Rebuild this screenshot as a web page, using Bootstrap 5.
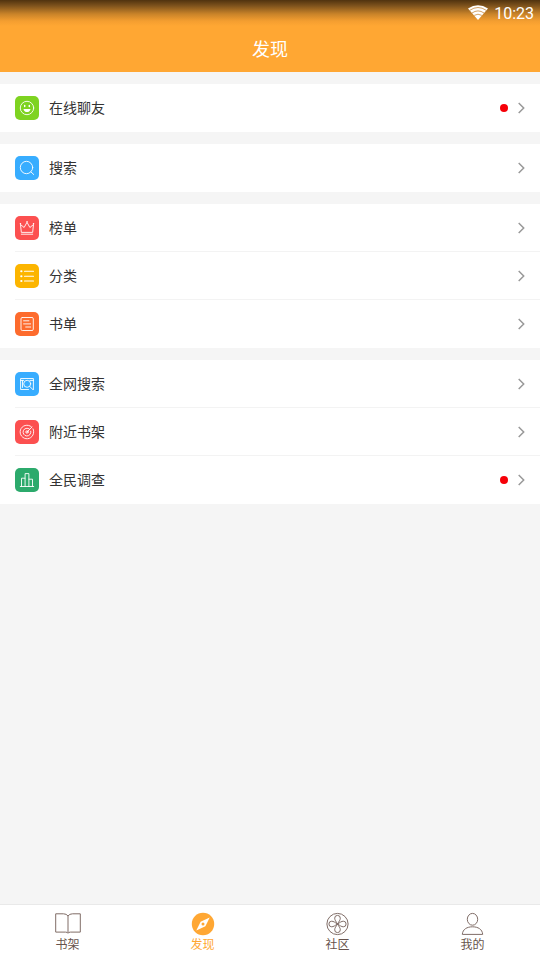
<!DOCTYPE html>
<html lang="zh-CN">
<head>
<meta charset="utf-8">
<meta name="viewport" content="width=device-width, initial-scale=1">
<title>发现</title>
<link href="https://cdn.jsdelivr.net/npm/bootstrap@5.3.0/dist/css/bootstrap.min.css" rel="stylesheet">
<style>
body{font-family:Roboto,"Noto Sans CJK SC",sans-serif;background:#f5f5f5;color:#333}
.app-head{height:72px;color:#fff;background:linear-gradient(#50330f 0,#80541d 6px,#c98329 14px,#f49e30 21px,#ffa733 26px)}
.status{height:25px;font-size:16px;line-height:25px;padding-right:6px;gap:6px}
.status span{padding-top:1px}
.title{height:47px;font-size:18px;line-height:49px}
.groups{gap:12px;padding-top:12px}
.group-item{height:48px;padding:0 15px 0 0;margin-left:15px;font-size:14px;border:0;color:#333;background:#fff}
.group-item span{padding-top:1px}
.group-item + .group-item{box-shadow:0 -1px 0 #f3f3f3}
.tile{width:24px;height:24px;border-radius:5px;margin-right:10px;fill:none;stroke:#fff;stroke-width:.9;stroke-linecap:round;stroke-linejoin:round}
.green{background:#7ed321}.blue{background:#38adff}.red{background:#fc5050}.yellow{background:#fcb500}.orange{background:#fd6b2d}.teal{background:#2caa6c}
.dot{width:8px;height:8px;background:#f60008;margin-right:10px}
.chev{fill:none;stroke:#999;stroke-width:1.5}
.tabs{height:56px;background:#fff;border-top:1px solid #e9e9e9}
.tab-link{color:#67534c;font-size:12px;line-height:16px;padding-top:6px}
.tab-link span{padding-top:1px}
.tab-link svg{fill:none;stroke:#806d67;stroke-width:1}
.tab-link.current{color:#ffa733}
</style>
<script src="https://cdn.jsdelivr.net/npm/bootstrap@5.3.0/dist/js/bootstrap.bundle.min.js"></script>
</head>
<body class="vh-100 d-flex flex-column overflow-hidden">
<header class="app-head flex-shrink-0">
<div class="status d-flex justify-content-end align-items-center">
<svg width="20" height="15" viewBox="0 0 20 15"><path fill="#fff" d="M0 3.5Q10-3 20 3.5L10 15Z"/><path d="M1.8 5.3Q10-.3 18.2 5.3M4 8Q10 3.8 16 8M6.2 10.4Q10 8 13.8 10.4" fill="none" stroke="#c98a3e" stroke-width=".8"/></svg>
<span>10:23</span>
</div>
<div class="title text-center">发现</div>
</header>
<main class="groups flex-grow-1 d-flex flex-column">
<section class="bg-white">
<a class="group-item d-flex align-items-center text-decoration-none" href="#"><svg class="tile green" viewBox="0 0 24 24"><circle cx="12" cy="12" r="6.7"/><path d="M8.5 13h7c-.2 4.1-6.8 4.1-7 0Z" fill="#fff" stroke="none"/><path d="M9.7 9.5v1M14.3 9.5v1" stroke-width="1.5"/></svg><span>在线聊友</span><i class="dot rounded-circle ms-auto"></i><svg class="chev" width="7" height="12" viewBox="0 0 7 12"><path d="m.7 1 5 5-5 5"/></svg></a>
</section>
<section class="bg-white">
<a class="group-item d-flex align-items-center text-decoration-none" href="#"><svg class="tile blue" viewBox="0 0 24 24"><circle cx="11.5" cy="11.5" r="6.2"/><path d="m16 16 2.7 2.5"/></svg><span>搜索</span><svg class="chev ms-auto" width="7" height="12" viewBox="0 0 7 12"><path d="m.7 1 5 5-5 5"/></svg></a>
</section>
<section class="bg-white">
<a class="group-item d-flex align-items-center text-decoration-none" href="#"><svg class="tile red" viewBox="0 0 24 24"><path d="M6.3 18.2h11.4M6.3 16 5.5 8.5l3.6 3L12 6.3l2.9 5.2 3.6-3-.8 7.5Z"/><path d="M5.4 7.7h.1M12 5.7h.1M18.5 7.7h.1" stroke-width="1.4"/></svg><span>榜单</span><svg class="chev ms-auto" width="7" height="12" viewBox="0 0 7 12"><path d="m.7 1 5 5-5 5"/></svg></a>
<a class="group-item d-flex align-items-center text-decoration-none" href="#"><svg class="tile yellow" viewBox="0 0 24 24"><path d="M9.5 7.3h9M9.5 12.2h9M9.5 17h9" stroke-width="1.1"/><path d="M6.2 7.3h.3M6.2 12.2h.3M6.2 17h.3" stroke-width="2"/></svg><span>分类</span><svg class="chev ms-auto" width="7" height="12" viewBox="0 0 7 12"><path d="m.7 1 5 5-5 5"/></svg></a>
<a class="group-item d-flex align-items-center text-decoration-none" href="#"><svg class="tile orange" viewBox="0 0 24 24"><rect x="6" y="5.5" width="12.3" height="13" rx="1.3"/><path d="M8.6 8.8h5.3M8.6 11.9h7M10.7 15h5"/></svg><span>书单</span><svg class="chev ms-auto" width="7" height="12" viewBox="0 0 7 12"><path d="m.7 1 5 5-5 5"/></svg></a>
</section>
<section class="bg-white">
<a class="group-item d-flex align-items-center text-decoration-none" href="#"><svg class="tile blue" viewBox="0 0 24 24"><path d="M13.5 17.5H5.6v-11h12.8v11M5.6 8.4h3M15 8.4h3.4M7.5 8.4v7"/><circle cx="12.2" cy="11.8" r="3.5"/><path d="m14.8 14.5 3.2 3.2"/></svg><span>全网搜索</span><svg class="chev ms-auto" width="7" height="12" viewBox="0 0 7 12"><path d="m.7 1 5 5-5 5"/></svg></a>
<a class="group-item d-flex align-items-center text-decoration-none" href="#"><svg class="tile red" viewBox="0 0 24 24"><path d="M16.3 6.7A6.8 6.8 0 1 0 18 8.8M14.4 9A3.9 3.9 0 1 0 15.8 11.2M12 12l5-5"/><circle cx="12" cy="12" r="1.2"/></svg><span>附近书架</span><svg class="chev ms-auto" width="7" height="12" viewBox="0 0 7 12"><path d="m.7 1 5 5-5 5"/></svg></a>
<a class="group-item d-flex align-items-center text-decoration-none" href="#"><svg class="tile teal" viewBox="0 0 24 24"><path d="M5.3 18.5h13.4M6.5 18.5v-8.3h3.6v8.3M10.1 10.2V5.6h3.8v12.9M13.9 11.2h3.6v7.3"/></svg><span>全民调查</span><i class="dot rounded-circle ms-auto"></i><svg class="chev" width="7" height="12" viewBox="0 0 7 12"><path d="m.7 1 5 5-5 5"/></svg></a>
</section>
</main>
<nav class="tabs d-flex flex-shrink-0">
<a class="tab-link col-3 d-flex flex-column align-items-center text-decoration-none" href="#"><svg width="26" height="25" viewBox="0 0 26 25"><path d="M13 5Q11.5 2.8 8.5 2.8H.7v18.3h9.8Q12.5 21.1 13 22.3Q13.5 21.1 15.5 21.1h9.8V2.8h-7.8Q14.5 2.8 13 5v17"/></svg><span>书架</span></a>
<a class="tab-link current col-3 d-flex flex-column align-items-center text-decoration-none" href="#"><svg width="26" height="25" viewBox="0 0 26 25"><circle cx="13" cy="13" r="11.2" fill="#ffa733" stroke="none"/><path d="M19.7 6.5 15.4 15.3 6.3 19.5 10.6 10.7Z" fill="#fff" stroke="none"/><circle cx="13" cy="13" r="1.5" fill="#ffa733" stroke="none"/></svg><span>发现</span></a>
<a class="tab-link col-3 d-flex flex-column align-items-center text-decoration-none" href="#"><svg width="26" height="25" viewBox="0 0 26 25"><circle cx="12.5" cy="13" r="10.6"/><path id="petal" d="M12.5 13C11 10.5 9.7 9 9.7 7.2a2.8 2.8 0 0 1 5.6 0C15.3 9 14 10.5 12.5 13Z"/><use href="#petal" transform="rotate(90 12.5 13)"/><use href="#petal" transform="rotate(180 12.5 13)"/><use href="#petal" transform="rotate(270 12.5 13)"/></svg><span>社区</span></a>
<a class="tab-link col-3 d-flex flex-column align-items-center text-decoration-none" href="#"><svg width="26" height="25" viewBox="0 0 26 25"><ellipse cx="12.5" cy="8.3" rx="5.2" ry="5.9"/><path d="M2.3 23.4C2.7 18.2 7 15.8 12.5 15.8s9.8 2.4 10.2 7.6Z"/></svg><span>我的</span></a>
</nav>
</body>
</html>
